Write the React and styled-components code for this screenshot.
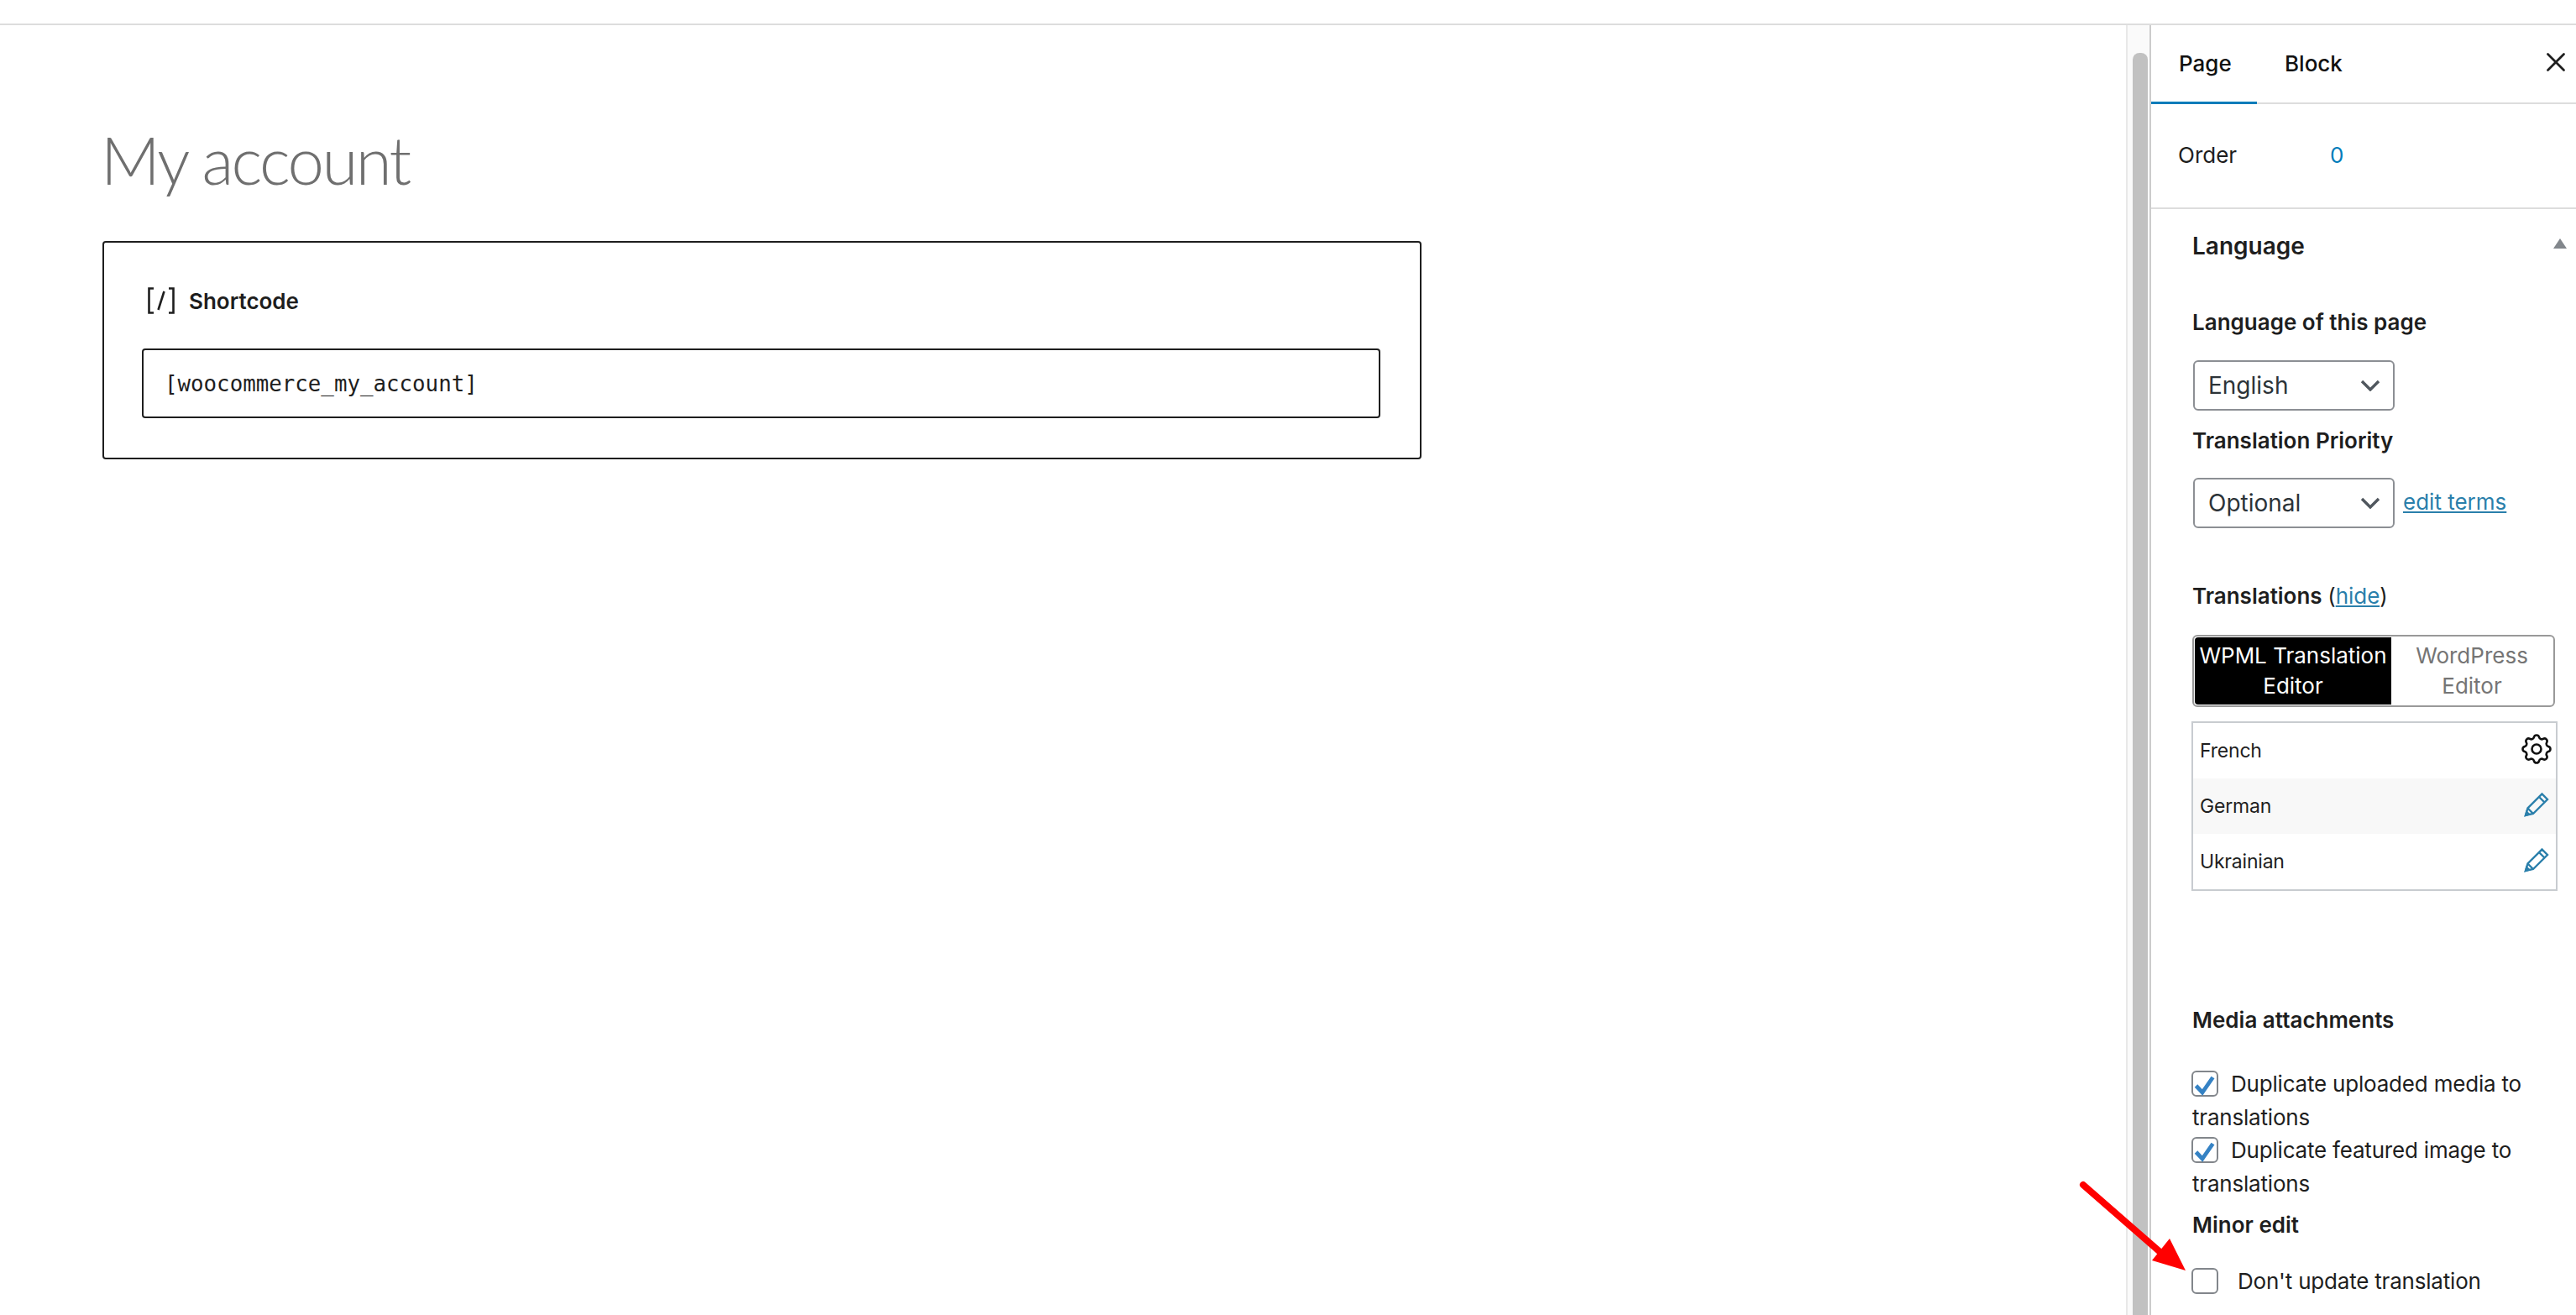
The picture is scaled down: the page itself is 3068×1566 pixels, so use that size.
import React from 'react'
import styled, { createGlobalStyle } from 'styled-components'
import { HiOutlineCog } from 'react-icons/hi'
import { X } from 'lucide-react'

const GlobalStyle = createGlobalStyle`
  html, body { margin: 0; padding: 0; background: #fff; }
  body { font-family: Inter, "Noto Sans", sans-serif; color: #1e1e1e; }
  * { box-sizing: border-box; }
`

const Page = styled.div`
  position: relative;
  height: 1566px;
  overflow: hidden;
  display: flex;
  flex-direction: column;
`
const TopBar = styled.header`
  height: 30px;
  flex: none;
  border-bottom: 2px solid #ddd;
`
const Body = styled.div`
  flex: 1;
  display: flex;
  min-height: 0;
`
const Editor = styled.main`
  flex: 1;
  padding: 0 0 0 122px;
`
const Title = styled.h1`
  margin: 110px 0 0 -2px;
  font-family: Lato, sans-serif;
  font-weight: 300;
  font-size: 78px;
  line-height: 100px;
  color: #6f6f6f;
  letter-spacing: -2.6px;
`
const Card = styled.section`
  margin-top: 47px;
  width: 1571px;
  height: 260px;
  border: 2px solid #1e1e1e;
  border-radius: 4px;
  padding: 0 47px 0 45px;
`
const CardHead = styled.div`
  display: flex;
  align-items: center;
  gap: 16px;
  height: 36px;
  margin: 51px 0 0 6px;
`
const BlockName = styled.span`
  font-size: 26px;
  font-weight: 600;
`
const ShortcodeInput = styled.div`
  margin-top: 39px;
  height: 83px;
  border: 2px solid #1e1e1e;
  border-radius: 4px;
  padding-left: 25px;
  display: flex;
  align-items: center;
  font-family: "DejaVu Sans Mono", monospace;
  font-size: 25.8px;
`
const ScrollTrack = styled.div`
  width: 28px;
  flex: none;
  background: #fafafa;
  border-left: 2px solid #e8e8e8;
  padding: 33px 2px 0 6px;
`
const ScrollThumb = styled.div`
  height: 100%;
  background: #c1c1c1;
  border-radius: 8px 8px 0 0;
`
const Sidebar = styled.aside`
  width: 508px;
  flex: none;
  border-left: 2px solid #ccc;
`
const Tabs = styled.div`
  display: flex;
  align-items: stretch;
  height: 94px;
  border-bottom: 2px solid #ddd;
`
const Tab = styled.div`
  width: ${p => p.$w}px;
  padding-left: 33px;
  margin-bottom: -2px;
  display: flex;
  align-items: center;
  font-size: 26px;
  font-weight: 500;
  color: #111;
  border-bottom: 3px solid ${p => (p.$active ? '#007cba' : 'transparent')};
`
const CloseButton = styled.div`
  margin-left: auto;
  margin-right: 5px;
  display: flex;
  align-items: center;
  padding-bottom: 4px;
`
const OrderRow = styled.div`
  height: 125px;
  padding: 0 0 3px 32px;
  border-bottom: 2px solid #ddd;
  display: flex;
  align-items: center;
  font-size: 26px;
`
const OrderLabel = styled.span`
  width: 181px;
`
const OrderValue = styled.span`
  color: #007cba;
`
const Panel = styled.div`
  padding: 0 11px 0 49px;
`
const PanelHead = styled.div`
  margin-top: 24px;
  height: 40px;
  display: flex;
  align-items: center;
  justify-content: space-between;
  font-size: 28px;
  font-weight: 600;
`
const Triangle = styled.span`
  width: 0;
  height: 0;
  margin-bottom: 6px;
  border-left: 8px solid transparent;
  border-right: 8px solid transparent;
  border-bottom: 12px solid #82878c;
`
const Label = styled.div`
  margin-top: ${p => p.$top}px;
  line-height: 36px;
  font-size: 26px;
  font-weight: 600;
`
const Normal = styled.span`
  font-weight: 400;
`
const TextLink = styled.a`
  color: #2a7fab;
  text-decoration: underline;
  font-weight: 400;
`
const SelectBox = styled.div`
  width: 240px;
  height: 60px;
  margin: ${p => p.$top}px 0 0 1px;
  flex: none;
  border: 2px solid #8c8f94;
  border-radius: 6px;
  padding: 0 15px 0 16px;
  display: flex;
  align-items: center;
  justify-content: space-between;
  font-size: 28px;
  color: #2c3338;
`
const SelectRow = styled.div`
  display: flex;
  align-items: center;
  gap: 10px;
  font-size: 26px;
`
const EditTerms = styled(TextLink)`
  margin-top: 26px;
  padding-bottom: 4px;
`
const Segments = styled.div`
  margin-top: 28px;
  width: 432px;
  height: 86px;
  padding: 1px;
  border: 2px solid #999;
  border-radius: 6px;
  display: flex;
`
const Segment = styled.div`
  width: ${p => p.$w}px;
  display: flex;
  align-items: center;
  justify-content: center;
  text-align: center;
  white-space: nowrap;
  font-size: 26px;
  line-height: 36px;
  border-radius: ${p => (p.$active ? '4px 0 0 4px' : '0')};
  background: ${p => (p.$active ? '#000' : '#fff')};
  color: ${p => (p.$active ? '#fff' : '#757575')};
`
const LangTable = styled.div`
  margin: 17px 0 0 -1px;
  width: 436px;
  height: 202px;
  border: 2px solid #c8ccd0;
`
const LangRow = styled.div`
  height: 66px;
  padding: 0 7px 0 8px;
  display: flex;
  align-items: center;
  justify-content: space-between;
  font-size: 23px;
  letter-spacing: -0.2px;
  background: ${p => (p.$alt ? '#f8f8f8' : '#fff')};
`
const IconSlot = styled.span`
  width: 32px;
  height: 32px;
  display: flex;
  align-items: center;
  justify-content: center;
  margin-bottom: 4px;
  svg { flex: none; }
`
const GearSlot = styled(IconSlot)`
  path { stroke-width: 1.4; }
`
const CheckLine = styled.div`
  margin-top: ${p => p.$top}px;
  font-size: 26px;
  line-height: 40px;
  letter-spacing: -0.2px;
`
const Box = styled.span`
  display: inline-block;
  vertical-align: middle;
  width: 32px;
  height: 31px;
  margin: -4px ${p => p.$gap}px 0 -1px;
  border: 2px solid #82868b;
  border-radius: 6px;
  background: #fff;
`
const ArrowSvg = styled.svg`
  position: absolute;
  left: 2470px;
  top: 1400px;
`

const Pencil = () => (
  <svg width="30" height="30" viewBox="0 0 30 30" fill="none" stroke="#2a7fab" strokeWidth="2.4">
    <path d="M2 28 L4.5 19.5 L21.5 2.5 L28 9 L11 26 Z" />
    <path d="M18 6 L24.5 12.5" />
    <path d="M4.5 19.5 L11 26" />
    <path d="M2 28 L3.2 24 L6 26.8 Z" fill="#2a7fab" />
  </svg>
)

const Chevron = () => (
  <svg width="24" height="14" viewBox="0 0 24 14" fill="none" stroke="#50575e" strokeWidth="3.4">
    <path d="M2 2 L12 12 L22 2" />
  </svg>
)

const Check = () => (
  <svg width="27" height="27" viewBox="0 0 27 27" fill="none" stroke="#3582c4" strokeWidth="4.8">
    <path d="M3.5 14 L11 22 L23.5 4" />
  </svg>
)

const BracketIcon = () => (
  <svg width="34" height="32" viewBox="0 0 34 32" fill="none" stroke="#1e1e1e" strokeWidth="2.6">
    <path d="M8 1.5 H2.5 V30.5 H8" />
    <path d="M26 1.5 H31.5 V30.5 H26" />
    <path d="M20.5 5 L13.5 27" />
  </svg>
)

export default function App() {
  return (
    <Page>
      <GlobalStyle />
      <TopBar />
      <Body>
        <Editor>
          <Title>My account</Title>
          <Card>
            <CardHead>
              <BracketIcon />
              <BlockName>Shortcode</BlockName>
            </CardHead>
            <ShortcodeInput>[woocommerce_my_account]</ShortcodeInput>
          </Card>
        </Editor>
        <ScrollTrack>
          <ScrollThumb />
        </ScrollTrack>
        <Sidebar>
          <Tabs>
            <Tab $w={126} $active>Page</Tab>
            <Tab $w={120}>Block</Tab>
            <CloseButton><X size={38} strokeWidth={1.7} color="#1e1e1e" /></CloseButton>
          </Tabs>
          <OrderRow>
            <OrderLabel>Order</OrderLabel>
            <OrderValue>0</OrderValue>
          </OrderRow>
          <Panel>
            <PanelHead>Language<Triangle /></PanelHead>
            <Label $top={53}>Language of this page</Label>
            <SelectBox $top={27}>English<Chevron /></SelectBox>
            <Label $top={18}>Translation Priority</Label>
            <SelectRow>
              <SelectBox $top={26}>Optional<Chevron /></SelectBox>
              <EditTerms>edit terms</EditTerms>
            </SelectRow>
            <Label $top={63}>Translations <Normal>(<TextLink>hide</TextLink>)</Normal></Label>
            <Segments>
              <Segment $w={234} $active>WPML Translation<br />Editor</Segment>
              <Segment $w={192}>WordPress<br />Editor</Segment>
            </Segments>
            <LangTable>
              <LangRow>French<GearSlot><HiOutlineCog size={44} color="#111" /></GearSlot></LangRow>
              <LangRow $alt>German<IconSlot><Pencil /></IconSlot></LangRow>
              <LangRow>Ukrainian<IconSlot><Pencil /></IconSlot></LangRow>
            </LangTable>
            <Label $top={136}>Media attachments</Label>
            <CheckLine $top={38}><Box $gap={15}><Check /></Box>Duplicate uploaded media to translations</CheckLine>
            <CheckLine $top={-1}><Box $gap={15}><Check /></Box>Duplicate featured image to translations</CheckLine>
            <Label $top={11}>Minor edit</Label>
            <CheckLine $top={29}><Box $gap={23} />Don't update translation</CheckLine>
          </Panel>
        </Sidebar>
      </Body>
      <ArrowSvg width="150" height="125" viewBox="0 0 150 125">
        <path d="M11 11 L105 93" stroke="#f00" strokeWidth="8" strokeLinecap="round" />
        <path d="M133 113 L114 75 L93 101 Z" fill="#f00" />
      </ArrowSvg>
    </Page>
  )
}
